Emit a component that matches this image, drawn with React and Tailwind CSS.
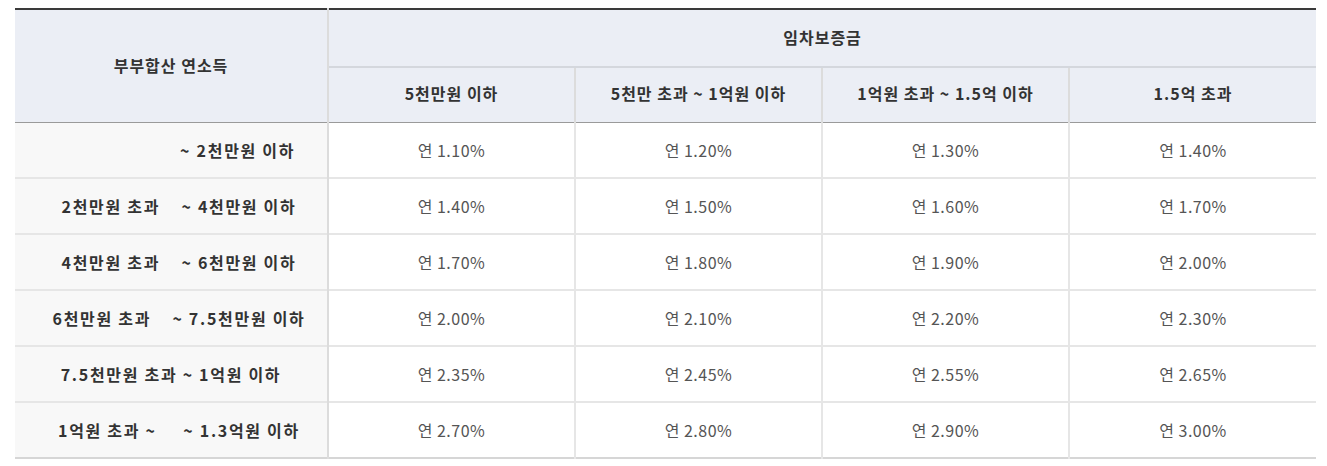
import React from 'react'

const cols = ['5천만원 이하', '5천만 초과 ~ 1억원 이하', '1억원 초과 ~ 1.5억 이하', '1.5억 초과']

const rows = [
  { label: '                         ~ 2천만원 이하', rates: ['1.10', '1.20', '1.30', '1.40'] },
  { label: '   2천만원 초과    ~ 4천만원 이하', rates: ['1.40', '1.50', '1.60', '1.70'] },
  { label: '   4천만원 초과    ~ 6천만원 이하', rates: ['1.70', '1.80', '1.90', '2.00'] },
  { label: '   6천만원 초과    ~ 7.5천만원 이하', rates: ['2.00', '2.10', '2.20', '2.30'] },
  { label: '7.5천만원 초과 ~ 1억원 이하', rates: ['2.35', '2.45', '2.55', '2.65'] },
  { label: '   1억원 초과 ~     ~ 1.3억원 이하', rates: ['2.70', '2.80', '2.90', '3.00'] },
]

export default function App() {
  return (
    <div
      className="w-[1327px] h-[466px] bg-white pt-2 pl-[15px]"
      style={{ fontFamily: '"Malgun Gothic", "Noto Sans CJK KR", "Noto Sans", sans-serif' }}
    >
      <table className="w-[1301px] border-collapse table-fixed text-[16px] border-t-2 border-t-[#3a3a3a] border-b-2 border-b-[#d6d6d6]">
        <colgroup>
          <col className="w-[313px]" />
          <col className="w-[247px]" />
          <col className="w-[247px]" />
          <col className="w-[247px]" />
          <col className="w-[247px]" />
        </colgroup>
        <thead>
          <tr className="h-[58px]">
            <th
              rowSpan={2}
              className="bg-[#ebeef5] font-bold text-[#333] tracking-[1px] border-r-2 border-r-[#dcdcdc] border-b border-b-[#9a9a9a] align-middle pb-[2px]"
            >
              부부합산 연소득
            </th>
            <th colSpan={4} className="bg-[#ebeef5] font-bold text-[#333] tracking-[1px] border-b-2 border-b-[#d4d7dd] pb-[3px]">
              임차보증금
            </th>
          </tr>
          <tr className="h-[55px]">
            {cols.map((c, i) => (
              <th
                key={c}
                className={
                  'bg-[#ebeef5] font-bold text-[#333] tracking-[1px] border-b border-b-[#9a9a9a] pb-[4px] ' +
                  (i < 3 ? 'border-r-2 border-r-[#dcdcdc]' : '')
                }
              >
                {c}
              </th>
            ))}
          </tr>
        </thead>
        <tbody>
          {rows.map((r, ri) => (
            <tr key={ri} className={'h-[56px] ' + (ri < rows.length - 1 ? 'border-b-2 border-b-[#e6e6e6]' : '')}>
              <td className="bg-[#f8f8f8] font-bold text-[#333] tracking-[1.7px] text-center whitespace-pre border-r-2 border-r-[#dcdcdc]">
                {r.label}
              </td>
              {r.rates.map((v, i) => (
                <td
                  key={i}
                  className={'text-center text-[#555] tracking-[0.5px] ' + (i < 3 ? 'border-r-2 border-r-[#e6e6e6]' : '')}
                >
                  연 {v}%
                </td>
              ))}
            </tr>
          ))}
        </tbody>
      </table>
    </div>
  )
}
